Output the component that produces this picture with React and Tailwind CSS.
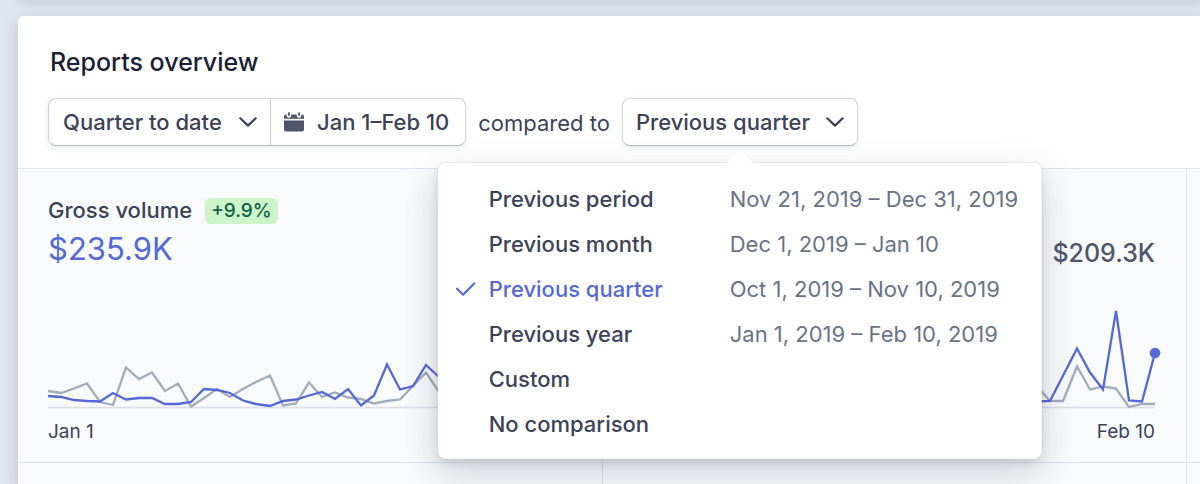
const periods = [
  { label: "Previous period", range: "Nov 21, 2019 – Dec 31, 2019" },
  { label: "Previous month", range: "Dec 1, 2019 – Jan 10" },
  { label: "Previous quarter", range: "Oct 1, 2019 – Nov 10, 2019", selected: true },
  { label: "Previous year", range: "Jan 1, 2019 – Feb 10, 2019" },
  { label: "Custom" },
  { label: "No comparison" },
];

const current =
  "0,86 13,87 26,90 39,91 52,91.5 65,83 78,89.5 91,88 104,88 117,94 130,94 143,92 156,79 169,80 182,83 195,90.5 208,94 222,96 235,91 248,89.5 261,85.5 274,82 287,89 300,79 313,95.5 326,85.5 339,54.5 352,79.5 365,76 378,55 391,67 450,88 560,70 680,92 800,78 900,90 980,92 1002,91 1029,38.5 1042,62.5 1055,79.5 1068,1 1081,90.5 1094,91.5 1107,43";
const previous =
  "0,81 13,83 26,78.5 39,73.5 52,92 65,95 78,57.5 91,69 104,62.5 117,81 130,73.5 143,96.5 156,88 169,79 182,87 195,79 208,72 222,65.5 235,95.5 248,93.5 261,72.5 274,87 287,82.5 300,87.5 313,89 326,93.5 339,91 352,89.5 365,76 378,62.5 391,82 450,92 560,80 680,88 800,90 900,85 980,66 1002,91 1015,91 1029,56.5 1042,79.5 1055,76.5 1068,78.5 1081,97 1094,94 1107,94";

function Chevron({ className = "" }) {
  return (
    <svg viewBox="0 0 18 10" className={`h-2.5 w-[18px] shrink-0 ${className}`} aria-hidden="true">
      <path
        d="M1.300 1.300 9 8.600l7.700-7.300"
        fill="none"
        stroke="currentColor"
        strokeWidth="2.200"
        strokeLinecap="round"
        strokeLinejoin="round"
      />
    </svg>
  );
}

function CheckMark() {
  return (
    <svg viewBox="0 0 20 14" className="h-3.5 w-5 text-[#5469d4]" aria-hidden="true">
      <path
        d="M1.300 6.700 7.300 12.700 18.700 1.300"
        fill="none"
        stroke="currentColor"
        strokeWidth="2.200"
        strokeLinecap="round"
        strokeLinejoin="round"
      />
    </svg>
  );
}

function CalendarIcon() {
  return (
    <svg viewBox="0 0 20 20" className="size-5 text-[#4f566b]" aria-hidden="true">
      <path
        fill="currentColor"
        d="M0 8.400h20V17.500a2 2 0 0 1-2 2H2a2 2 0 0 1-2-2ZM0 6.800V4.500a2 2 0 0 1 2-2h.8a2.300 2.300 0 1 0 4.200 0h6a2.300 2.300 0 1 0 4.200 0h.8a2 2 0 0 1 2 2v2.300Z"
      />
      <path d="M4.900 1.100v2M15.100 1.100v2" stroke="currentColor" strokeWidth="1.900" strokeLinecap="round" />
    </svg>
  );
}

function VolumeChart() {
  return (
    <svg
      viewBox="0 0 1107 98"
      preserveAspectRatio="none"
      className="block h-[98px] w-full overflow-visible"
      role="img"
      aria-label="Gross volume by day"
    >
      <line x1="0" x2="1107" y1="97.500" y2="97.500" stroke="#dcdfe6" strokeWidth="1.500" />
      <polyline points={previous} fill="none" stroke="#a3acb9" strokeWidth="2.300" />
      <polyline points={current} fill="none" stroke="#5469d4" strokeWidth="2.300" />
      <circle cx="1107" cy="43" r="5.300" fill="#5469d4" />
    </svg>
  );
}

export default function App() {
  return (
    <div className="flex min-h-screen flex-col overflow-hidden bg-[#e2e6ee] font-[Inter,sans-serif] text-[22px] leading-7 text-[#3c4257]">
      <div className="ml-5 shadow-[0_0_8px_2px_rgba(60,66,87,0.28)]" />
      <section className="mt-4 ml-[18px] flex flex-1 flex-col rounded-tl-md bg-white shadow-[0_4px_16px_rgba(60,66,87,0.22)]">
        <header className="px-8 pt-8 pb-[22px]">
          <h1 className="text-[25px] leading-7 font-medium text-[#1a1f36]">Reports overview</h1>
          <div className="mt-[22px] -ml-0.5 flex items-center gap-3">
            <div className="flex h-12 rounded-lg border border-[#d0d2d9] border-b-[#b8bac2] bg-white font-medium shadow-[0_2px_6px_rgba(60,66,87,0.1)]">
              <div className="relative flex items-center border-r border-[#c9cbd2]">
                <select aria-label="Date range" className="h-full appearance-none bg-transparent pr-12 pl-3.5 outline-none">
                  <option>Quarter to date</option>
                </select>
                <Chevron className="pointer-events-none absolute right-[13px]" />
              </div>
              <button type="button" className="flex items-center gap-[13px] pr-4 pl-[13px]">
                <CalendarIcon />
                Jan 1–Feb 10
              </button>
            </div>
            <span className="pt-0.5">compared to</span>
            <div className="relative">
              <button
                type="button"
                aria-haspopup="menu"
                aria-expanded="true"
                className="flex h-12 items-center gap-4 rounded-lg border border-[#d0d2d9] border-b-[#b8bac2] bg-white px-[13px] font-medium shadow-[0_2px_6px_rgba(60,66,87,0.1)]"
              >
                Previous quarter
                <Chevron />
              </button>
              <div className="absolute top-[65px] left-1/2 z-10 -translate-x-1/2 rounded-lg bg-white shadow-[0_0_0_1px_rgba(60,66,87,0.08),0_14px_36px_rgba(60,66,87,0.22),0_4px_10px_rgba(0,0,0,0.08)]">
                <svg viewBox="0 0 26 12" className="absolute -top-3 left-1/2 h-3 w-[26px] -translate-x-1/2" aria-hidden="true">
                  <path d="M0 12 10 2Q13-1 16 2L26 12Z" fill="#fff" />
                </svg>
                <div role="menu" className="py-[13px]">
                  {periods.map((p) => (
                    <button
                      key={p.label}
                      type="button"
                      role="menuitemradio"
                      aria-checked={Boolean(p.selected)}
                      className="grid h-[45px] w-full grid-cols-[33px_241px_auto] items-center justify-start pr-6 pl-[18px] text-left whitespace-nowrap"
                    >
                      <span>{p.selected && <CheckMark />}</span>
                      <span className={p.selected ? "font-medium text-[#5469d4]" : "font-medium"}>{p.label}</span>
                      <span className="text-[#697386]">{p.range}</span>
                    </button>
                  ))}
                </div>
              </div>
            </div>
          </div>
        </header>
        <div className="grid flex-1 grid-cols-[1fr_1fr_13px] grid-rows-[auto_1fr] border-t border-[#e0e3ea] bg-[#f8fafc]">
          <article className="col-span-2 border-r border-b border-[#dfe2e9] pt-[27px] pr-[31px] pb-4 pl-[30px]">
            <div className="flex items-end justify-between">
              <div>
                <div className="flex items-end gap-[13px]">
                  <h2 className="font-medium">Gross volume</h2>
                  <span className="rounded-md bg-[#cbf4c9] px-1.5 text-[19px] leading-[26px] font-medium text-[#0e6245]">+9.9%</span>
                </div>
                <p className="mt-[5px] text-[31px] leading-10 text-[#5469d4]">$235.9K</p>
              </div>
              <p className="text-[25px] leading-8 font-medium text-[#4f566b]">$209.3K</p>
            </div>
            <div className="mt-[41px]">
              <VolumeChart />
            </div>
            <div className="mt-2.5 flex justify-between text-[19px] leading-7">
              <span>Jan 1</span>
              <span>Feb 10</span>
            </div>
          </article>
          <div className="border-b border-[#dfe2e9]" />
          <div className="border-r border-[#dfe2e9]" />
          <div className="border-r border-[#dfe2e9]" />
        </div>
      </section>
    </div>
  );
}
